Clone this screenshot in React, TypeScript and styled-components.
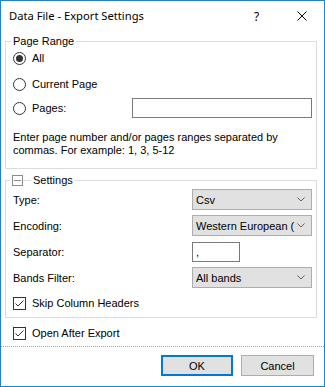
import React from "react";
import styled, { createGlobalStyle } from "styled-components";

const GlobalStyle = createGlobalStyle`
  html, body {
    margin: 0;
    padding: 0;
    background: #ffffff;
  }
  * {
    box-sizing: border-box;
  }
`;

const Window = styled.div`
  width: 325px;
  height: 387px;
  border: 1px solid #1883d7;
  background: #ffffff;
  display: flex;
  flex-direction: column;
  font-family: "Liberation Sans", Arial, sans-serif;
  font-size: 11px;
  color: #000000;
  overflow: hidden;
`;

const TitleBar = styled.div`
  height: 30px;
  display: flex;
  align-items: center;
  flex: none;
`;

const Title = styled.div`
  flex: 1;
  padding-left: 8px;
  font-family: "Noto Sans", "Open Sans", sans-serif;
  font-size: 11.2px;
  line-height: 30px;
  white-space: nowrap;
`;

const CaptionButton = styled.div`
  width: 45px;
  height: 30px;
  display: flex;
  align-items: center;
  justify-content: center;
  font-family: "Noto Sans", "Open Sans", sans-serif;
  font-size: 12px;
`;

const Content = styled.div`
  padding: 0 7px 0 4px;
  display: flex;
  flex-direction: column;
`;

const GroupBox = styled.fieldset<{ $top: number; $bottom: number }>`
  margin: ${({ $top }) => $top}px 0 0;
  padding: 0 4px ${({ $bottom }) => $bottom}px 7px;
  border: 1px solid #dcdcdc;
  min-width: 0;
`;

const Legend = styled.legend<{ $offset: number }>`
  margin-left: ${({ $offset }) => $offset}px;
  padding: 0 2px;
  line-height: 13px;
  font-size: 11px;
  display: flex;
  align-items: center;
`;

const CollapseBox = styled.span`
  width: 11px;
  height: 11px;
  border: 1px solid #8c8c8c;
  display: flex;
  align-items: center;
  justify-content: center;
  &::after {
    content: "";
    width: 7px;
    height: 1px;
    background: #8c8c8c;
  }
`;

const LegendLine = styled.span`
  width: 8px;
  height: 1px;
  background: #dcdcdc;
  margin: 0 2px 0 0;
`;

const RadioRow = styled.div<{ $top: number }>`
  display: flex;
  align-items: center;
  height: 20px;
  margin-top: ${({ $top }) => $top}px;
  gap: 6px;
`;

const Radio = styled.span<{ $checked?: boolean }>`
  width: 13px;
  height: 13px;
  border: 1px solid #333333;
  border-radius: 50%;
  display: flex;
  align-items: center;
  justify-content: center;
  flex: none;
  &::after {
    content: "";
    width: 7px;
    height: 7px;
    border-radius: 50%;
    background: ${({ $checked }) => ($checked ? "#333333" : "transparent")};
  }
`;

const TextBox = styled.div<{ $width: number }>`
  width: ${({ $width }) => $width}px;
  height: 20px;
  border: 1px solid #7a7a7a;
  background: #ffffff;
  padding-left: 3px;
  line-height: 18px;
  flex: none;
`;

const PagesBox = styled(TextBox)`
  margin-left: auto;
`;

const HelpText = styled.p`
  margin: 13px 0 0;
  line-height: 13px;
  width: 270px;
`;

const FieldRow = styled.div<{ $top: number }>`
  display: flex;
  align-items: center;
  height: 21px;
  margin-top: ${({ $top }) => $top}px;
`;

const FieldLabel = styled.span`
  width: 179px;
  flex: none;
`;

const Combo = styled.div`
  width: 120px;
  height: 21px;
  background: #e1e1e1;
  border: 1px solid #adadad;
  display: flex;
  align-items: center;
  padding-left: 3px;
  flex: none;
`;

const ComboText = styled.span`
  flex: 1;
  overflow: hidden;
  white-space: nowrap;
  font-size: 11px;
`;

const ComboArrow = styled.svg`
  width: 8px;
  height: 5px;
  margin: 0 6px 0 2px;
  flex: none;
`;

const CheckRow = styled.div<{ $top: number; $indent?: number }>`
  display: flex;
  align-items: center;
  gap: 6px;
  height: 16px;
  margin-top: ${({ $top }) => $top}px;
  padding-left: ${({ $indent }) => $indent ?? 0}px;
`;

const CheckBox = styled.span`
  width: 13px;
  height: 13px;
  border: 1px solid #333333;
  display: flex;
  flex: none;
  background: #ffffff;
`;

const Divider = styled.div`
  margin-top: 5px;
  border-top: 1px dotted #a0a0a0;
  flex: none;
`;

const ButtonBar = styled.div`
  display: flex;
  justify-content: flex-end;
  gap: 8px;
  padding: 8px 10px 0 0;
`;

const Button = styled.div<{ $default?: boolean; $width: number }>`
  width: ${({ $width }) => $width}px;
  height: 21px;
  background: #e1e1e1;
  border: ${({ $default }) =>
    $default ? "2px solid #0078d7" : "1px solid #adadad"};
  display: flex;
  align-items: center;
  justify-content: center;
  font-size: 11px;
`;

const Check = () => (
  <CheckBox>
    <svg width="11" height="11" viewBox="0 0 11 11">
      <path d="M1.5 5.5 L4 8 L9.5 2.5" fill="none" stroke="#333" strokeWidth="1" />
    </svg>
  </CheckBox>
);

const Arrow = () => (
  <ComboArrow viewBox="0 0 8 5">
    <path d="M0.5 0.5 L4 4 L7.5 0.5" fill="none" stroke="#606060" strokeWidth="1" />
  </ComboArrow>
);

export default function App() {
  return (
    <>
      <GlobalStyle />
      <Window>
        <TitleBar>
          <Title>Data File - Export Settings</Title>
          <CaptionButton>?</CaptionButton>
          <CaptionButton>
            <svg width="10" height="10" viewBox="0 0 10 10">
              <path d="M0.5 0.5 L9.5 9.5 M9.5 0.5 L0.5 9.5" stroke="#000" strokeWidth="1" />
            </svg>
          </CaptionButton>
        </TitleBar>
        <Content>
          <GroupBox $top={4} $bottom={11}>
            <Legend $offset={-2}>Page Range</Legend>
            <RadioRow $top={0}>
              <Radio $checked />
              <span>All</span>
            </RadioRow>
            <RadioRow $top={6}>
              <Radio />
              <span>Current Page</span>
            </RadioRow>
            <RadioRow $top={4}>
              <Radio />
              <span>Pages:</span>
              <PagesBox $width={180} />
            </RadioRow>
            <HelpText>
              Enter page number and/or pages ranges separated by commas. For
              example: 1, 3, 5-12
            </HelpText>
          </GroupBox>
          <GroupBox $top={5} $bottom={6}>
            <Legend $offset={-3}>
              <CollapseBox />
              <LegendLine />
              Settings
            </Legend>
            <FieldRow $top={2}>
              <FieldLabel>Type:</FieldLabel>
              <Combo>
                <ComboText>Csv</ComboText>
                <Arrow />
              </Combo>
            </FieldRow>
            <FieldRow $top={5}>
              <FieldLabel>Encoding:</FieldLabel>
              <Combo>
                <ComboText>Western European (</ComboText>
                <Arrow />
              </Combo>
            </FieldRow>
            <FieldRow $top={5}>
              <FieldLabel>Separator:</FieldLabel>
              <TextBox $width={48}>,</TextBox>
            </FieldRow>
            <FieldRow $top={5}>
              <FieldLabel>Bands Filter:</FieldLabel>
              <Combo>
                <ComboText>All bands</ComboText>
                <Arrow />
              </Combo>
            </FieldRow>
            <CheckRow $top={7}>
              <Check />
              <span>Skip Column Headers</span>
            </CheckRow>
          </GroupBox>
          <CheckRow $top={7} $indent={8}>
            <Check />
            <span>Open After Export</span>
          </CheckRow>
        </Content>
        <Divider />
        <ButtonBar>
          <Button $default $width={72}>
            OK
          </Button>
          <Button $width={73}>Cancel</Button>
        </ButtonBar>
      </Window>
    </>
  );
}
